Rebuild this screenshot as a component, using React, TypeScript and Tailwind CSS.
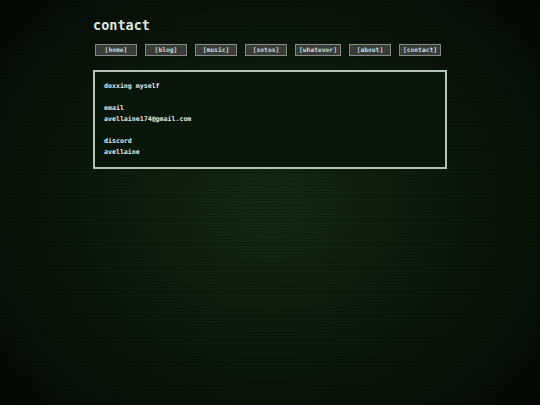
import React from 'react';

const navItems = ['home', 'blog', 'music', 'sotos', 'whatever', 'about', 'contact'];

const App: React.FC = () => {
  return (
    <div
      className="min-h-screen w-full bg-[repeating-linear-gradient(0deg,rgba(0,0,0,0.15)_0px,rgba(0,0,0,0.15)_1px,transparent_1px,transparent_3px),radial-gradient(ellipse_65%_75%_at_50%_50%,#142714_0%,#0f1d0f_35%,#091209_70%,#050805_100%)] text-[#e4e8e4]"
      style={{ fontFamily: '"DejaVu Sans Mono", "Liberation Mono", monospace' }}
    >
      <div className="mx-auto w-[354px] pt-[15px]">
        {/* Title */}
        <h1 className="text-[13.5px] font-bold leading-[20px] text-[#dfe4df]">contact</h1>

        {/* Nav */}
        <nav className="mt-[9px] ml-[2px] flex gap-2">
          {navItems.map((item) => (
            <button
              key={item}
              className="h-[12px] min-w-[42px] px-[3px] border border-[#858a85] bg-[#393d39] text-[6.3px] font-bold leading-[10px] text-[#d4d8d4]"
            >
              [{item}]
            </button>
          ))}
        </nav>

        {/* Content box */}
        <div className="mt-[14px] border-2 border-[#b4c2b4] bg-[#0b160b] px-[9px] py-[9px] text-[6.6px] font-bold leading-[11px] text-[#e4e8e4]">
          <p>doxxing myself</p>
          <p>&nbsp;</p>
          <p>email</p>
          <p>avellaine174@gmail.com</p>
          <p>&nbsp;</p>
          <p>discord</p>
          <p>avellaine</p>
        </div>
      </div>
    </div>
  );
};

export default App;
